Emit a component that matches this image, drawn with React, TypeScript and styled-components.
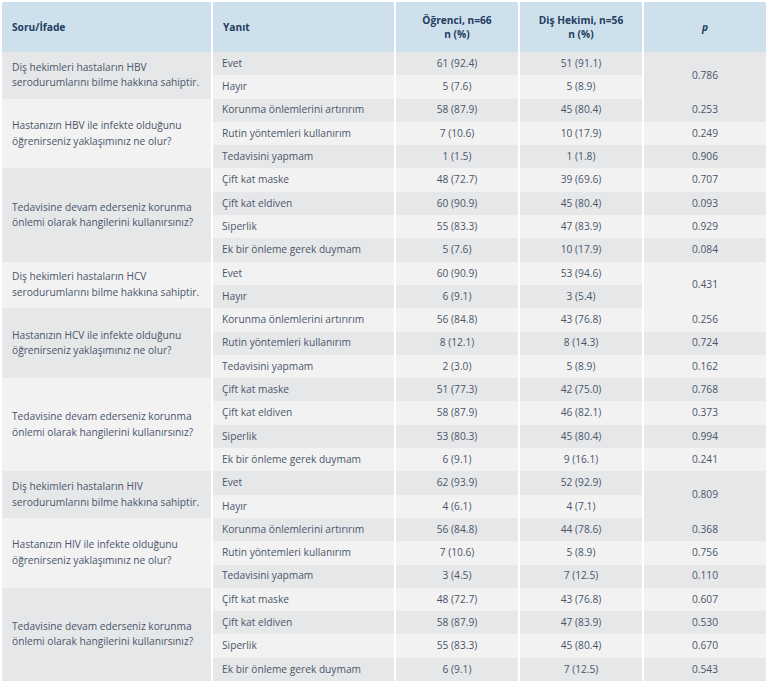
import styled, { createGlobalStyle } from "styled-components";

const GlobalStyle = createGlobalStyle`
  html, body {
    margin: 0;
    padding: 0;
    background: #ffffff;
  }
`;

type Row = { answer: string; student: string; dentist: string; p?: string };
type Group = { question: string; rows: Row[]; p?: string };

const groups: Group[] = [
  {
    question: "Diş hekimleri hastaların HBV serodurumlarını bilme hakkına sahiptir.",
    p: "0.786",
    rows: [
      { answer: "Evet", student: "61 (92.4)", dentist: "51 (91.1)" },
      { answer: "Hayır", student: "5 (7.6)", dentist: "5 (8.9)" },
    ],
  },
  {
    question: "Hastanızın HBV ile infekte olduğunu öğrenirseniz yaklaşımınız ne olur?",
    rows: [
      { answer: "Korunma önlemlerini artırırım", student: "58 (87.9)", dentist: "45 (80.4)", p: "0.253" },
      { answer: "Rutin yöntemleri kullanırım", student: "7 (10.6)", dentist: "10 (17.9)", p: "0.249" },
      { answer: "Tedavisini yapmam", student: "1 (1.5)", dentist: "1 (1.8)", p: "0.906" },
    ],
  },
  {
    question: "Tedavisine devam ederseniz korunma önlemi olarak hangilerini kullanırsınız?",
    rows: [
      { answer: "Çift kat maske", student: "48 (72.7)", dentist: "39 (69.6)", p: "0.707" },
      { answer: "Çift kat eldiven", student: "60 (90.9)", dentist: "45 (80.4)", p: "0.093" },
      { answer: "Siperlik", student: "55 (83.3)", dentist: "47 (83.9)", p: "0.929" },
      { answer: "Ek bir önleme gerek duymam", student: "5 (7.6)", dentist: "10 (17.9)", p: "0.084" },
    ],
  },
  {
    question: "Diş hekimleri hastaların HCV serodurumlarını bilme hakkına sahiptir.",
    p: "0.431",
    rows: [
      { answer: "Evet", student: "60 (90.9)", dentist: "53 (94.6)" },
      { answer: "Hayır", student: "6 (9.1)", dentist: "3 (5.4)" },
    ],
  },
  {
    question: "Hastanızın HCV ile infekte olduğunu öğrenirseniz yaklaşımınız ne olur?",
    rows: [
      { answer: "Korunma önlemlerini artırırım", student: "56 (84.8)", dentist: "43 (76.8)", p: "0.256" },
      { answer: "Rutin yöntemleri kullanırım", student: "8 (12.1)", dentist: "8 (14.3)", p: "0.724" },
      { answer: "Tedavisini yapmam", student: "2 (3.0)", dentist: "5 (8.9)", p: "0.162" },
    ],
  },
  {
    question: "Tedavisine devam ederseniz korunma önlemi olarak hangilerini kullanırsınız?",
    rows: [
      { answer: "Çift kat maske", student: "51 (77.3)", dentist: "42 (75.0)", p: "0.768" },
      { answer: "Çift kat eldiven", student: "58 (87.9)", dentist: "46 (82.1)", p: "0.373" },
      { answer: "Siperlik", student: "53 (80.3)", dentist: "45 (80.4)", p: "0.994" },
      { answer: "Ek bir önleme gerek duymam", student: "6 (9.1)", dentist: "9 (16.1)", p: "0.241" },
    ],
  },
  {
    question: "Diş hekimleri hastaların HIV serodurumlarını bilme hakkına sahiptir.",
    p: "0.809",
    rows: [
      { answer: "Evet", student: "62 (93.9)", dentist: "52 (92.9)" },
      { answer: "Hayır", student: "4 (6.1)", dentist: "4 (7.1)" },
    ],
  },
  {
    question: "Hastanızın HIV ile infekte olduğunu öğrenirseniz yaklaşımınız ne olur?",
    rows: [
      { answer: "Korunma önlemlerini artırırım", student: "56 (84.8)", dentist: "44 (78.6)", p: "0.368" },
      { answer: "Rutin yöntemleri kullanırım", student: "7 (10.6)", dentist: "5 (8.9)", p: "0.756" },
      { answer: "Tedavisini yapmam", student: "3 (4.5)", dentist: "7 (12.5)", p: "0.110" },
    ],
  },
  {
    question: "Tedavisine devam ederseniz korunma önlemi olarak hangilerini kullanırsınız?",
    rows: [
      { answer: "Çift kat maske", student: "48 (72.7)", dentist: "43 (76.8)", p: "0.607" },
      { answer: "Çift kat eldiven", student: "58 (87.9)", dentist: "47 (83.9)", p: "0.530" },
      { answer: "Siperlik", student: "55 (83.3)", dentist: "45 (80.4)", p: "0.670" },
      { answer: "Ek bir önleme gerek duymam", student: "6 (9.1)", dentist: "7 (12.5)", p: "0.543" },
    ],
  },
];

const Wrapper = styled.div`
  padding: 2px 2px 0 2px;
  font-family: "Open Sans", "Noto Sans", sans-serif;
`;

const Table = styled.table`
  width: 764px;
  table-layout: fixed;
  border-collapse: separate;
  border-spacing: 0;
`;

const Col = styled.col<{ $w: number }>`
  width: ${(p) => p.$w}px;
`;

const HeadCell = styled.th<{ $align?: "left" | "center" }>`
  height: 50px;
  padding: 0 10px;
  background: #cfe0ed;
  color: #223d5e;
  font-size: 10.2px;
  font-weight: 700;
  line-height: 14px;
  text-align: ${(p) => p.$align ?? "center"};
  vertical-align: middle;
  border-left: 2px solid #ffffff;
  box-sizing: border-box;

  &:first-child {
    border-left: none;
  }
`;

const PMark = styled.i`
  font-style: italic;
`;

const Cell = styled.td<{ $shade: boolean; $align?: "left" | "center" }>`
  height: 23.3px;
  padding: 0 9px;
  background: ${(p) => (p.$shade ? "#e6e7e9" : "#f2f2f3")};
  color: #4a5669;
  font-size: 10.2px;
  line-height: 15.5px;
  text-align: ${(p) => p.$align ?? "center"};
  vertical-align: middle;
  border-left: 2px solid #ffffff;
  box-sizing: border-box;
  white-space: nowrap;
`;

const QuestionCell = styled.td<{ $shade: boolean }>`
  padding: 0 4px 0 10px;
  background: ${(p) => (p.$shade ? "#e6e7e9" : "#f2f2f3")};
  color: #4a5669;
  font-size: 10.2px;
  line-height: 15.5px;
  text-align: left;
  vertical-align: middle;
`;

export default function App() {
  let rowIndex = 0;
  return (
    <Wrapper>
      <GlobalStyle />
      <Table>
        <colgroup>
          <Col $w={209} />
          <Col $w={183} />
          <Col $w={124} />
          <Col $w={124} />
          <Col $w={124} />
        </colgroup>
        <thead>
          <tr>
            <HeadCell $align="left">Soru/İfade</HeadCell>
            <HeadCell $align="left">Yanıt</HeadCell>
            <HeadCell>
              Öğrenci, n=66
              <br />n (%)
            </HeadCell>
            <HeadCell>
              Diş Hekimi, n=56
              <br />n (%)
            </HeadCell>
            <HeadCell>
              <PMark>p</PMark>
            </HeadCell>
          </tr>
        </thead>
        <tbody>
          {groups.map((g, gi) =>
            g.rows.map((r, ri) => {
              rowIndex += 1;
              const shade = rowIndex % 2 === 1;
              return (
                <tr key={`${gi}-${ri}`}>
                  {ri === 0 && (
                    <QuestionCell rowSpan={g.rows.length} $shade={gi % 2 === 0}>
                      {g.question}
                    </QuestionCell>
                  )}
                  <Cell $shade={shade} $align="left">
                    {r.answer}
                  </Cell>
                  <Cell $shade={shade}>{r.student}</Cell>
                  <Cell $shade={shade}>{r.dentist}</Cell>
                  {g.p
                    ? ri === 0 && (
                        <Cell $shade={shade} rowSpan={g.rows.length}>
                          {g.p}
                        </Cell>
                      )
                    : <Cell $shade={shade}>{r.p}</Cell>}
                </tr>
              );
            })
          )}
        </tbody>
      </Table>
    </Wrapper>
  );
}
